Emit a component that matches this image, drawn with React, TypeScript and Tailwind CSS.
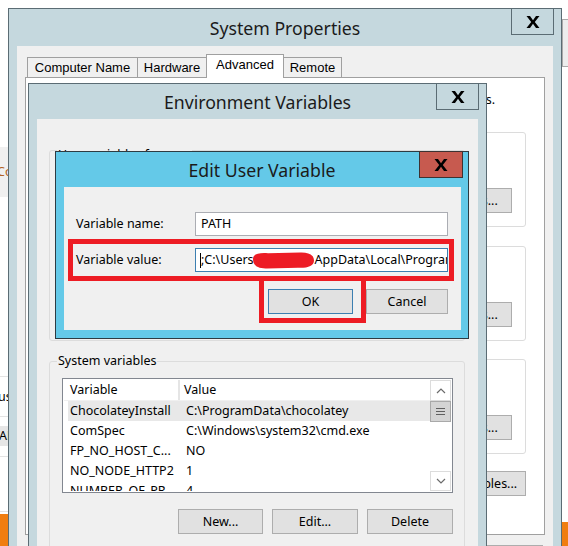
import type { ReactNode } from 'react'

// Bold title-bar "X" used by the Windows 8 close buttons
function CloseGlyph() {
  return (
    <svg width="14" height="12" viewBox="0 0 14 12" aria-hidden>
      <path d="M0.5 0H4L7 4.2 10 0H13.5L8.8 6 13.5 12H10L7 7.8 4 12H0.5L5.2 6Z" fill="#000" />
    </svg>
  )
}

function Btn({ children, className = '' }: { children: ReactNode; className?: string }) {
  return (
    <div className={`flex h-[25px] shrink-0 items-center justify-center border bg-[#e1e1e1] ${className}`}>
      {children}
    </div>
  )
}

function Chevron({ down }: { down?: boolean }) {
  return (
    <svg width="10" height="6" viewBox="0 0 10 6" aria-hidden>
      <polyline
        points={down ? '1,1 5,5 9,1' : '1,5 5,1 9,5'}
        fill="none"
        stroke="#6b6b6b"
        strokeWidth="1.2"
      />
    </svg>
  )
}

const SYSTEM_VARS = [
  { name: 'ChocolateyInstall', value: 'C:\\ProgramData\\chocolatey' },
  { name: 'ComSpec', value: 'C:\\Windows\\system32\\cmd.exe' },
  { name: 'FP_NO_HOST_C...', value: 'NO' },
  { name: 'NO_NODE_HTTP2', value: '1' },
  { name: 'NUMBER_OF_PR...', value: '4' },
]

export default function App() {
  return (
    <div className="relative h-[546px] w-[568px] overflow-hidden bg-white font-['Noto_Sans',sans-serif] text-[12.5px] leading-[16px] text-black">
      {/* window behind, peeking out on the left */}
      <div className="absolute left-0 top-0 flex h-full w-[8px] flex-col overflow-hidden whitespace-nowrap">
        <div className="h-[147px] shrink-0" />
        <div className="flex h-[50px] shrink-0 items-center bg-[#f0f0f0] text-[#b3631f]">
          <span className="-ml-[3px]">Co</span>
        </div>
        <div className="h-[180px] shrink-0 border-b border-[#e3e3e3]" />
        <div className="flex h-[40px] shrink-0 items-center border-b border-[#e3e3e3]">
          <span className="-ml-[2px]">us</span>
        </div>
        <div className="h-[9px] shrink-0" />
        <div className="flex h-[20px] shrink-0 items-center bg-[#e6e6e6]">
          <span className="-ml-[1px]">AF</span>
        </div>
        <div className="h-[11px] shrink-0 border-b border-[#e3e3e3]" />
        <div className="h-[55px] shrink-0 border-b border-[#e3e3e3]" />
        <div className="h-[2px] shrink-0" />
        <div className="flex-1 bg-[#f07d10]" />
      </div>

      {/* window behind, peeking out on the right */}
      <div className="absolute right-0 top-[19px] h-[48px] w-[6px] border-y border-l border-[#a9a9a9] bg-[#ededed]" />
      <div className="absolute bottom-0 right-0 h-[24px] w-[6px] bg-[#f07d10]" />

      {/* System Properties */}
      <div className="absolute left-[8px] top-[8px] flex h-[560px] w-[554px] flex-col border border-[#5b6c74] bg-[#c5d8de]">
        <div className="relative flex h-[37px] shrink-0 items-center justify-center text-[17.7px] text-[#1b1b1b]">
          System Properties
          <div className="absolute -top-px right-[7px] flex h-[27px] w-[43px] items-center justify-center border border-[#5b6c74]">
            <CloseGlyph />
          </div>
        </div>
        <div className="mx-[8px] flex flex-1 flex-col bg-[#f0f0f0] px-[8px] pt-[8px]">
          <div className="flex h-[23px] shrink-0 items-end pl-[2px] font-['Liberation_Sans',sans-serif] text-[13px]">
            <div className="flex h-[20px] w-[111px] items-center justify-center border-x border-t border-[#a0a0a0]">Computer Name</div>
            <div className="-ml-px flex h-[20px] w-[70px] items-center justify-center border-x border-t border-[#a0a0a0]">Hardware</div>
            <div className="relative z-10 -mb-px -ml-px flex h-[24px] w-[78px] items-start justify-center border-x border-t border-[#a0a0a0] bg-white pt-[2px]">Advanced</div>
            <div className="-ml-px flex h-[20px] w-[59px] items-center justify-center border-x border-t border-[#a0a0a0]">Remote</div>
          </div>
          <div className="flex h-[458px] shrink-0 flex-col border border-[#a0a0a0] bg-white">
            <div className="pr-[49px] pt-[14px] text-right">
              You must be logged on as an Administrator to make most of these changes.
            </div>
            <div className="ml-[11px] mr-[18px] mt-[24px] flex h-[95px] flex-col items-end rounded-[3px] border border-[#dcdcdc] pr-[13px] pt-[55px]">
              <Btn className="w-[86px] border-[#adadad]">Settings...</Btn>
            </div>
            <div className="ml-[11px] mr-[18px] mt-[19px] flex h-[95px] flex-col items-end rounded-[3px] border border-[#dcdcdc] pr-[13px] pt-[55px]">
              <Btn className="w-[86px] border-[#adadad]">Settings...</Btn>
            </div>
            <div className="ml-[11px] mr-[18px] mt-[18px] flex h-[95px] flex-col items-end rounded-[3px] border border-[#dcdcdc] pr-[13px] pt-[55px]">
              <Btn className="w-[86px] border-[#adadad]">Settings...</Btn>
            </div>
            <div className="mr-[18px] mt-[17px] flex justify-end">
              <Btn className="w-[160px] border-[#adadad]">Environment Variables...</Btn>
            </div>
          </div>
          <div className="mr-[2px] mt-[10px] flex justify-end gap-[8px]">
            <Btn className="w-[75px] border-[#adadad]">OK</Btn>
            <Btn className="w-[75px] border-[#adadad]">Cancel</Btn>
            <Btn className="w-[75px] border-[#adadad]">Apply</Btn>
          </div>
        </div>
      </div>

      {/* Environment Variables */}
      <div className="absolute left-[28px] top-[83px] flex h-[480px] w-[459px] flex-col border border-[#5b6c74] bg-[#c5d8de]">
        <div className="relative flex h-[35px] shrink-0 items-center justify-center text-[17.7px] text-[#1b1b1b]">
          Environment Variables
          <div className="absolute -top-px right-[7px] flex h-[27px] w-[43px] items-center justify-center border border-[#5b6c74]">
            <CloseGlyph />
          </div>
        </div>
        <div className="mx-[8px] flex flex-1 flex-col bg-[#f0f0f0] pt-[18px]">
          <fieldset className="ml-[12px] mr-[13px] h-[204px] shrink-0 rounded-[3px] border border-[#dcdcdc]">
            <legend className="ml-[7px] px-[1px] pt-[10px] leading-[16px]">User variables for user</legend>
          </fieldset>
          <fieldset className="ml-[12px] mr-[13px] mt-[12px] h-[220px] shrink-0 rounded-[3px] border border-[#dcdcdc]">
            <legend className="ml-[7px] px-[1px] leading-[16px]">System variables</legend>
            <div className="ml-[12px] mr-[11px] mt-[9px] flex h-[115px] border border-[#828790] bg-white p-px">
              <div className="flex min-w-0 flex-1 flex-col overflow-hidden">
                <div className="flex h-[21px] shrink-0 items-center border-b border-[#f0f0f0]">
                  <div className="flex h-full w-[116px] items-center border-r-2 border-[#e5e5e5] pl-[6px]">Variable</div>
                  <div className="pl-[4px]">Value</div>
                </div>
                {SYSTEM_VARS.map((v, i) => (
                  <div
                    key={v.name}
                    className={`ml-[4px] flex h-[20px] shrink-0 items-center whitespace-nowrap ${i === 0 ? 'bg-[#e8e8e8]' : ''}`}
                  >
                    <div className="w-[114px] pl-[2px]">{v.name}</div>
                    <div className="pl-[4px]">{v.value}</div>
                  </div>
                ))}
              </div>
              <div className="flex w-[21px] shrink-0 flex-col">
                <div className="flex h-[21px] items-center justify-center border border-[#dcdcdc]">
                  <Chevron />
                </div>
                <div className="flex h-[21px] flex-col items-center justify-center gap-[2px] border border-[#a9a9a9] bg-[#d4d4d4]">
                  <div className="h-px w-[9px] bg-[#5f5f5f]" />
                  <div className="h-px w-[9px] bg-[#5f5f5f]" />
                  <div className="h-px w-[9px] bg-[#5f5f5f]" />
                </div>
                <div className="flex-1" />
                <div className="flex h-[20px] items-center justify-center border border-[#dcdcdc]">
                  <Chevron down />
                </div>
              </div>
            </div>
            <div className="mr-[11px] mt-[16px] flex justify-end gap-[9px]">
              <Btn className="w-[85px] border-[#adadad]">New...</Btn>
              <Btn className="w-[86px] border-[#adadad]">Edit...</Btn>
              <Btn className="w-[86px] border-[#adadad]">Delete</Btn>
            </div>
          </fieldset>
        </div>
      </div>

      {/* Edit User Variable */}
      <div className="absolute left-[55px] top-[151px] flex h-[188px] w-[414px] flex-col border border-[#2d3b42] bg-[#64c9e8]">
        <div className="relative flex h-[35px] shrink-0 items-center justify-center text-[17.7px] text-[#1b1b1b]">
          Edit User Variable
          <div className="absolute -top-px right-[5px] flex h-[27px] w-[44px] items-center justify-center border border-[#3d3232] bg-[#c75a4f]">
            <CloseGlyph />
          </div>
        </div>
        <div className="mb-[8px] ml-[8px] mr-[7px] flex flex-1 flex-col bg-[#f0f0f0] pl-[12px] pr-[13px] pt-[25px]">
          <div className="flex items-center">
            <div className="w-[119px]">Variable name:</div>
            <div className="flex h-[24px] w-[253px] items-center border border-[#abadb3] bg-white pl-[5px]">PATH</div>
          </div>
          <div className="mt-[12px] flex items-center">
            <div className="w-[119px]">Variable value:</div>
            <div className="flex h-[24px] w-[253px] items-center overflow-hidden whitespace-nowrap border border-[#3c7fb1] bg-white pl-[4px]">
              <span className="h-[15px] w-px shrink-0 bg-black" />
              <span>;C:\Users</span>
              <svg className="-ml-[3px] shrink-0" width="64" height="18" viewBox="0 0 64 18" aria-hidden>
                <path
                  d="M2 8C2 3 8 1.5 17 2.2L49 1.6C58 1.2 63 4 63 9.5C63 15 57 17.2 47 16.8L16 17.4C6 17.8 2 14 2 8Z"
                  fill="#ed1c24"
                />
              </svg>
              <span>AppData\Local\Programs\Microsoft VS Code\bin</span>
            </div>
          </div>
          <div className="mt-[17px] flex justify-end gap-[13px]">
            <Btn className="w-[85px] border-[#3c7fb1]">OK</Btn>
            <Btn className="w-[82px] border-[#adadad]">Cancel</Btn>
          </div>
        </div>

        {/* red highlight marks drawn over the dialog */}
        <div className="pointer-events-none absolute left-[12px] top-[87px] h-[42px] w-[386px] border-[5px] border-[#ed1c24]" />
        <div className="pointer-events-none absolute left-[203px] top-[124px] h-[47px] w-[107px] border-[5px] border-[#ed1c24]" />
      </div>
    </div>
  )
}
